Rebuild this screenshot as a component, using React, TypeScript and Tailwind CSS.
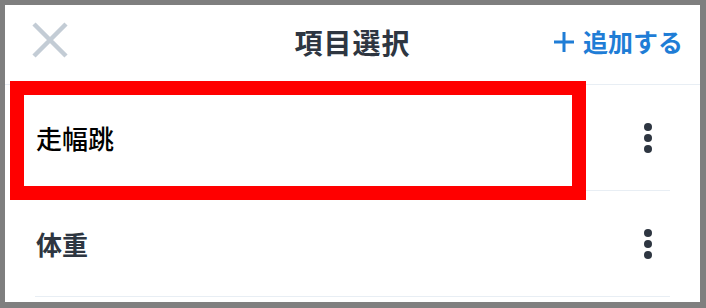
import React from 'react';

interface Item {
    id: number;
    name: string;
    tone: string;
}

const items: Item[] = [
    { id: 1, name: '走幅跳', tone: 'text-black font-medium' },
    { id: 2, name: '体重', tone: 'text-[#2e3641] font-bold' },
];

const CloseIcon: React.FC = () => (
    <svg width="36" height="36" viewBox="0 0 36 36" className="-mt-[4px]">
        <path d="M2 2 L34 34 M34 2 L2 34" stroke="#c3ccd5" strokeWidth="4.5" strokeLinecap="butt" />
    </svg>
);

const PlusIcon: React.FC = () => (
    <svg width="22" height="22" viewBox="0 0 22 22">
        <path d="M11 1 V21 M1 11 H21" stroke="#1f7dd6" strokeWidth="3" />
    </svg>
);

const MoreIcon: React.FC = () => (
    <div className="flex flex-col gap-[3px]">
        <span className="block w-2 h-2 rounded-full bg-[#2e3641]" />
        <span className="block w-2 h-2 rounded-full bg-[#2e3641]" />
        <span className="block w-2 h-2 rounded-full bg-[#2e3641]" />
    </div>
);

const App: React.FC = () => {
    return (
        <div
            className="relative w-[706px] h-[308px] bg-white border-t-[5px] border-l-[5px] border-r-[6px] border-b-[6px] border-[#7f7f7f] overflow-hidden"
            style={{ fontFamily: '"Noto Sans CJK JP", "Noto Sans", sans-serif' }}
        >
            {/* Header */}
            <div className="h-[80px] border-b border-[#e8eef4] grid grid-cols-[1fr_auto_1fr] items-center pb-[6px]">
                <div className="pl-[27px] flex items-center">
                    <CloseIcon />
                </div>
                <h1 className="text-[28px] leading-none font-bold text-[#2e3641] tracking-[1px]">項目選択</h1>
                <div className="flex items-center justify-end pr-[17px] gap-[8px] text-[#1f7dd6]">
                    <PlusIcon />
                    <span className="text-[25px] leading-none font-semibold">追加する</span>
                </div>
            </div>

            {/* List */}
            <ul className="px-[30px]">
                {items.map(item => (
                    <li
                        key={item.id}
                        className="h-[106px] border-b border-[#e8eef4] flex items-center justify-between pl-[1px] pr-[18px]"
                    >
                        <span className={`text-[26px] leading-none ${item.tone}`}>{item.name}</span>
                        <MoreIcon />
                    </li>
                ))}
            </ul>

            {/* Highlight annotation */}
            <div className="absolute left-[5px] top-[76px] w-[576px] h-[119px] border-[14px] border-[#ff0000] pointer-events-none" />
        </div>
    );
};

export default App;
